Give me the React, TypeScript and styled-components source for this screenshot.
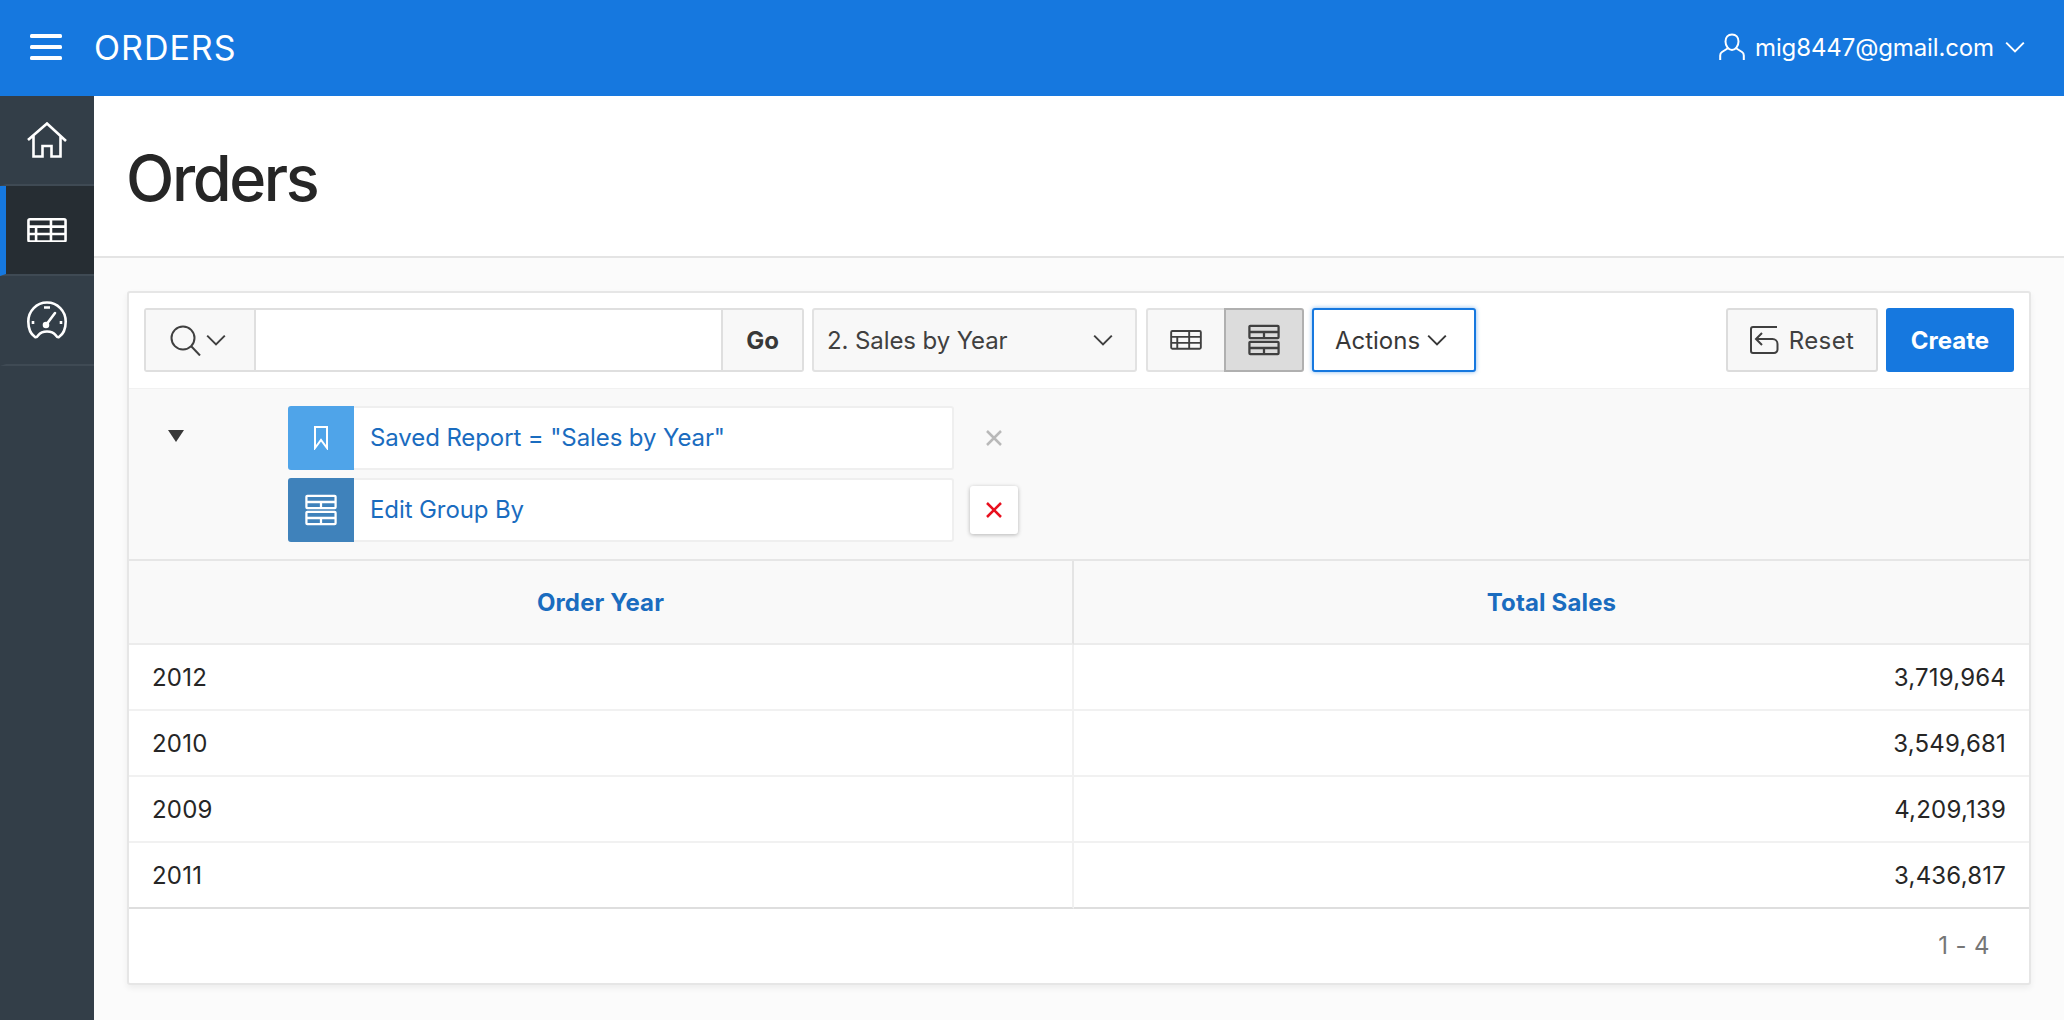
import { Fragment } from 'react';
import styled, { createGlobalStyle } from 'styled-components';

const GlobalStyle = createGlobalStyle`
  html, body {
    margin: 0;
    padding: 0;
    height: 100%;
    background: #fbfbfb;
  }
  body {
    font-family: Inter, "Liberation Sans", sans-serif;
    color: #262626;
    overflow: hidden;
  }
  * {
    box-sizing: border-box;
  }
`;

const Page = styled.div`
  display: flex;
  flex-direction: column;
  height: 1020px;
`;

const TopBar = styled.header`
  display: flex;
  align-items: center;
  justify-content: space-between;
  height: 96px;
  padding: 0 38px 2px 30px;
  background: #1678df;
  color: #fff;
`;

const Brand = styled.div`
  display: flex;
  align-items: center;
  gap: 32px;
`;

const BrandName = styled.span`
  font-size: 34px;
  font-weight: 400;
  letter-spacing: 1px;
`;

const UserMenu = styled.div`
  display: flex;
  align-items: center;
  gap: 10px;
  font-size: 24px;
  letter-spacing: -0.12px;
`;

const Body = styled.div`
  display: flex;
  flex: 1;
  min-height: 0;
`;

const SideNav = styled.nav`
  display: flex;
  flex-direction: column;
  flex: none;
  width: 94px;
  background: #333e48;
`;

const NavItem = styled.div<{ $active?: boolean }>`
  display: flex;
  align-items: center;
  justify-content: center;
  height: 90px;
  padding-right: 6px;
  border-bottom: 2px solid #3f4a54;
  border-left: 6px solid ${(props) => (props.$active ? '#1678df' : 'transparent')};
  background: ${(props) => (props.$active ? '#262d33' : 'transparent')};
  color: #fff;
`;

const Main = styled.main`
  flex: 1;
  min-width: 0;
`;

const TitleBar = styled.div`
  display: flex;
  align-items: center;
  height: 162px;
  padding: 4px 32px 0;
  background: #fff;
  border-bottom: 2px solid #e4e4e4;
`;

const Title = styled.h1`
  margin: 0;
  font-size: 63px;
  font-weight: 500;
  letter-spacing: -2.4px;
  color: #262626;
`;

const Content = styled.div`
  padding: 33px 33px 0 33px;
`;

const Card = styled.section`
  height: 694px;
  background: #fff;
  border: 2px solid #e6e6e6;
  border-radius: 3px;
  box-shadow: 0 3px 6px rgba(0, 0, 0, 0.06);
`;

const Toolbar = styled.div`
  display: flex;
  align-items: center;
  height: 95px;
  padding: 15px 15px 16px;
`;

const SearchGroup = styled.div`
  display: flex;
  width: 660px;
  height: 64px;
  border: 2px solid #dfdfdf;
  border-radius: 3px;
  background: #fff;
`;

const SearchToggle = styled.div`
  display: flex;
  align-items: center;
  justify-content: center;
  gap: 4px;
  width: 110px;
  padding-right: 3px;
  background: #f8f8f8;
  border-right: 2px solid #dfdfdf;
  color: #404040;
`;

const SearchField = styled.div`
  flex: 1;
`;

const GoButton = styled.div`
  display: flex;
  align-items: center;
  justify-content: center;
  width: 81px;
  background: #f8f8f8;
  border-left: 2px solid #dfdfdf;
  font-size: 24px;
  font-weight: 700;
  color: #383838;
`;

const ReportSelect = styled.div`
  display: flex;
  align-items: center;
  justify-content: space-between;
  width: 325px;
  height: 64px;
  margin-left: 8px;
  padding: 0 21px 0 13px;
  background: #f8f8f8;
  border: 2px solid #e2e2e2;
  border-radius: 3px;
  font-size: 24px;
  letter-spacing: -0.1px;
  color: #404040;
`;

const ViewSwitch = styled.div`
  display: flex;
  width: 158px;
  height: 64px;
  margin-left: 9px;
`;

const ViewButton = styled.div<{ $selected?: boolean }>`
  display: flex;
  align-items: center;
  justify-content: center;
  flex: 1;
  color: #404040;
  background: ${(props) => (props.$selected ? '#dcdcdc' : '#f8f8f8')};
  border: 2px solid ${(props) => (props.$selected ? '#b0b0b0' : '#e2e2e2')};
  border-right-width: ${(props) => (props.$selected ? '2px' : '0')};
  border-radius: ${(props) => (props.$selected ? '0 3px 3px 0' : '3px 0 0 3px')};
`;

const ActionsButton = styled.div`
  display: flex;
  align-items: center;
  justify-content: center;
  gap: 6px;
  width: 164px;
  height: 64px;
  margin-left: 8px;
  padding-right: 5px;
  background: #fff;
  border: 2px solid #1678df;
  border-radius: 3px;
  box-shadow: 0 0 4px rgba(22, 120, 223, 0.55);
  font-size: 24px;
  color: #383838;
`;

const Spacer = styled.div`
  flex: 1;
`;

const ResetButton = styled.div`
  display: flex;
  align-items: center;
  justify-content: center;
  gap: 10px;
  width: 152px;
  height: 64px;
  background: #f8f8f8;
  border: 2px solid #dcdcdc;
  border-radius: 3px;
  font-size: 24px;
  letter-spacing: 0.4px;
  color: #404040;
`;

const CreateButton = styled.div`
  display: flex;
  align-items: center;
  justify-content: center;
  width: 128px;
  height: 64px;
  margin-left: 8px;
  background: #1678df;
  border-radius: 3px;
  font-size: 24px;
  font-weight: 700;
  color: #fff;
`;

const FilterPanel = styled.div`
  display: flex;
  height: 173px;
  padding: 17px 0 0;
  background: #f9f9f9;
  border-top: 1px solid #f1f1f1;
  border-bottom: 2px solid #e6e6e6;
`;

const CollapseCell = styled.div`
  flex: none;
  width: 159px;
  padding: 24px 0 0 39px;
`;

const CollapseArrow = styled.div`
  width: 0;
  height: 0;
  border-left: 8px solid transparent;
  border-right: 8px solid transparent;
  border-top: 12px solid #383838;
`;

const FilterList = styled.div`
  display: flex;
  flex-direction: column;
  gap: 8px;
`;

const FilterRow = styled.div`
  display: flex;
  align-items: center;
`;

const FilterChip = styled.div`
  display: flex;
  width: 666px;
  height: 64px;
  background: #fff;
  border: 2px solid #efefef;
  border-left: 0;
  border-radius: 3px;
`;

const FilterIcon = styled.div<{ $tone: string }>`
  display: flex;
  align-items: center;
  justify-content: center;
  flex: none;
  width: 66px;
  margin: -2px 0;
  background: ${(props) => props.$tone};
  border-radius: 3px 0 0 3px;
  color: #fff;
`;

const FilterLabel = styled.div`
  display: flex;
  align-items: center;
  padding: 0 0 2px 16px;
  font-size: 24px;
  letter-spacing: -0.1px;
  color: #1a6cbf;
`;

const RemoveCell = styled.div<{ $raised?: boolean }>`
  display: flex;
  align-items: center;
  justify-content: center;
  width: 48px;
  height: 48px;
  margin-left: 16px;
  color: ${(props) => (props.$raised ? '#e8101e' : '#b9b9b9')};
  background: ${(props) => (props.$raised ? '#fff' : 'transparent')};
  border-radius: 3px;
  box-shadow: ${(props) => (props.$raised ? '0 1px 4px rgba(0, 0, 0, 0.28)' : 'none')};
`;

const ReportTable = styled.div`
  display: grid;
  grid-template-columns: 945px 1fr;
`;

const HeadCell = styled.div`
  display: flex;
  align-items: center;
  justify-content: center;
  height: 84px;
  background: #f9f9f9;
  border-bottom: 2px solid #ececec;
  font-size: 24px;
  font-weight: 700;
  letter-spacing: 0.15px;
  color: #1a6cbf;

  &:first-child {
    border-right: 2px solid #e4e4e4;
  }
`;

const DataCell = styled.div<{ $end?: boolean; $last?: boolean }>`
  display: flex;
  align-items: center;
  justify-content: ${(props) => (props.$end ? 'flex-end' : 'flex-start')};
  height: 66px;
  padding: 0 23px;
  background: #fff;
  border-bottom: ${(props) => (props.$last ? '2px solid #dedede' : '2px solid #f1f1f1')};
  border-right: ${(props) => (props.$end ? '0' : '2px solid #f1f1f1')};
  font-size: 24px;
  letter-spacing: 0.2px;
  color: #262626;
`;

const Pagination = styled.div`
  display: flex;
  align-items: center;
  justify-content: flex-end;
  height: 72px;
  padding-right: 39px;
  font-size: 24px;
  letter-spacing: 0.4px;
  color: #767676;
`;

function Chevron({ size = 22 }: { size?: number }) {
  return (
    <svg width={size} height={size} viewBox="0 0 20 20" fill="none" stroke="currentColor" strokeWidth="1.8">
      <path d="M2 6l8 8 8-8" />
    </svg>
  );
}

function GroupIcon({ size = 32 }: { size?: number }) {
  return (
    <svg width={size} height={size} viewBox="0 0 34 34" fill="none" stroke="currentColor" strokeWidth="2.4">
      <path d="M2.500 2h29a1 1 0 0 1 1 1v11a1 1 0 0 1-1 1h-29a1 1 0 0 1-1-1V3a1 1 0 0 1 1-1zM1.500 8.500h31M17 8.500V15M2.500 19h29a1 1 0 0 1 1 1v11a1 1 0 0 1-1 1h-29a1 1 0 0 1-1-1V20a1 1 0 0 1 1-1zM1.500 25.500h31M17 25.500V32" />
    </svg>
  );
}

function GridIcon({ width, stroke }: { width: number; stroke: number }) {
  return (
    <svg width={width} height={width * 0.62} viewBox="0 0 40 25" fill="none" stroke="currentColor" strokeWidth={stroke}>
      <rect x="1.300" y="1.300" width="37.400" height="22.400" rx="1.500" />
      <path d="M1 8.700h38M1 16.200h38M9 8.700v15M24 1v22.600" />
    </svg>
  );
}

function CrossIcon() {
  return (
    <svg width="18" height="18" viewBox="0 0 18 18" stroke="currentColor" strokeWidth="2.500">
      <path d="M2 2l14 14M16 2L2 16" />
    </svg>
  );
}

const rows = [
  ['2012', '3,719,964'],
  ['2010', '3,549,681'],
  ['2009', '4,209,139'],
  ['2011', '3,436,817'],
];

export default function App() {
  return (
    <Page>
      <GlobalStyle />
      <TopBar>
        <Brand>
          <svg width="32" height="26" viewBox="0 0 32 26" fill="#fff">
            <rect y="0" width="32" height="4" rx="1.500" />
            <rect y="11" width="32" height="4" rx="1.500" />
            <rect y="22" width="32" height="4" rx="1.500" />
          </svg>
          <BrandName>ORDERS</BrandName>
        </Brand>
        <UserMenu>
          <svg width="26" height="28" viewBox="0 0 26 28" fill="none" stroke="#fff" strokeWidth="2">
            <path d="M13 1.500c4 0 6.500 3 6.500 7 0 4.500-3 8.500-6.500 8.500s-6.500-4-6.500-8.500c0-4 2.500-7 6.500-7zM8.500 15.500L3 19c-1.200.8-1.800 2-1.800 3.500V27M17.500 15.500L23 19c1.200.8 1.800 2 1.800 3.500V27" />
          </svg>
          <span>mig8447@gmail.com</span>
          <Chevron />
        </UserMenu>
      </TopBar>
      <Body>
        <SideNav>
          <NavItem>
            <svg width="40" height="36" viewBox="0 0 40 36" fill="none" stroke="#fff" strokeWidth="2.600">
              <path d="M1 18L20 1.500l19 17.500M6.500 14v20.500h9V24h9v10.500h9V14" />
            </svg>
          </NavItem>
          <NavItem $active>
            <GridIcon width={40} stroke={2.6} />
          </NavItem>
          <NavItem>
            <svg width="40" height="38" viewBox="0 0 40 38" fill="none" stroke="#fff" strokeWidth="2.600">
              <path d="M8 36C3.500 33 1.300 27 1.300 20.500 1.300 10 9.500 1.500 20 1.500S38.700 10 38.700 20.500c0 6.500-2.200 12.500-6.700 15.500-1.500.8-2.500-.5-3.500-2-1.500-2-4.500-3.500-8.500-3.500s-7 1.500-8.500 3.500c-1 1.500-2 2.800-3.500 2z" />
              <path d="M19 24l9-12" strokeLinecap="round" />
              <circle cx="19" cy="24" r="2" fill="#fff" />
              <path d="M17 6.500h6M6 20v3M34 20v3" />
            </svg>
          </NavItem>
        </SideNav>
        <Main>
          <TitleBar>
            <Title>Orders</Title>
          </TitleBar>
          <Content>
            <Card>
              <Toolbar>
                <SearchGroup>
                  <SearchToggle>
                    <svg width="31" height="31" viewBox="0 0 31 31" fill="none" stroke="currentColor" strokeWidth="2">
                      <circle cx="13" cy="13" r="11.500" />
                      <path d="M21 21l9 9.500" />
                    </svg>
                    <Chevron />
                  </SearchToggle>
                  <SearchField />
                  <GoButton>Go</GoButton>
                </SearchGroup>
                <ReportSelect>
                  <span>2. Sales by Year</span>
                  <Chevron />
                </ReportSelect>
                <ViewSwitch>
                  <ViewButton>
                    <GridIcon width={32} stroke={2.4} />
                  </ViewButton>
                  <ViewButton $selected>
                    <GroupIcon />
                  </ViewButton>
                </ViewSwitch>
                <ActionsButton>
                  Actions
                  <Chevron />
                </ActionsButton>
                <Spacer />
                <ResetButton>
                  <svg width="29" height="28" viewBox="0 0 29 28" fill="none" stroke="currentColor" strokeWidth="2">
                    <path d="M27 1H3a2 2 0 0 0-2 2v22a2 2 0 0 0 2 2h21a3.500 3.500 0 0 0 3.500-3.500V18a5 5 0 0 0-5-5H7M12 7l-6 6 6 6" />
                  </svg>
                  Reset
                </ResetButton>
                <CreateButton>Create</CreateButton>
              </Toolbar>
              <FilterPanel>
                <CollapseCell>
                  <CollapseArrow />
                </CollapseCell>
                <FilterList>
                  <FilterRow>
                    <FilterChip>
                      <FilterIcon $tone="#4fa4e9">
                        <svg width="16" height="24" viewBox="0 0 16 24" fill="none" stroke="#fff" strokeWidth="2">
                          <path d="M2 1h12v21l-6-8-6 8z" />
                        </svg>
                      </FilterIcon>
                      <FilterLabel>Saved Report = "Sales by Year"</FilterLabel>
                    </FilterChip>
                    <RemoveCell>
                      <CrossIcon />
                    </RemoveCell>
                  </FilterRow>
                  <FilterRow>
                    <FilterChip>
                      <FilterIcon $tone="#3f82bb">
                        <GroupIcon />
                      </FilterIcon>
                      <FilterLabel>Edit Group By</FilterLabel>
                    </FilterChip>
                    <RemoveCell $raised>
                      <CrossIcon />
                    </RemoveCell>
                  </FilterRow>
                </FilterList>
              </FilterPanel>
              <ReportTable>
                <HeadCell>Order Year</HeadCell>
                <HeadCell>Total Sales</HeadCell>
                {rows.map(([year, total], index) => (
                  <Fragment key={year}>
                    <DataCell $last={index === rows.length - 1}>{year}</DataCell>
                    <DataCell $end $last={index === rows.length - 1}>{total}</DataCell>
                  </Fragment>
                ))}
              </ReportTable>
              <Pagination>1 - 4</Pagination>
            </Card>
          </Content>
        </Main>
      </Body>
    </Page>
  );
}
